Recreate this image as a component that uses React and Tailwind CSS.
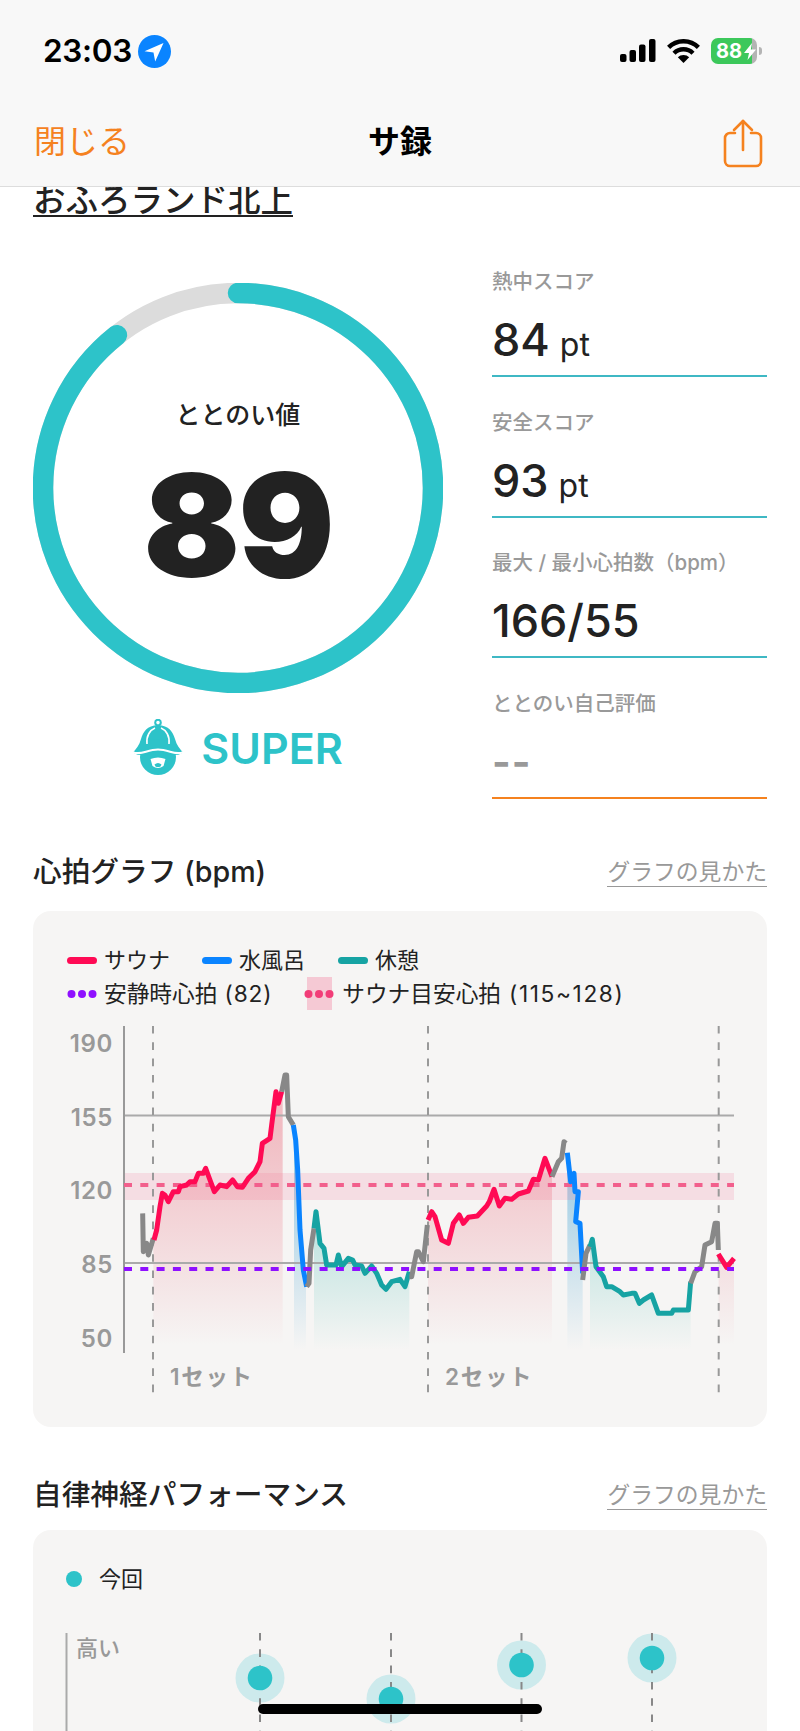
import React from "react";

const TEAL = "#2dc3c9";
const BOTTOM = 660;

// curve points are read off the reference: x = base + vx / 3, y = 1130 + vy / 3
const red1 = [[372,330],[380,300],[390,230],[397,190],[405,195],[415,215],[430,185],[445,185],[450,170],[470,165],[480,155],[495,155],[505,130],[520,130],[527,115],[540,150],[553,185],[570,165],[590,170],[608,150],[622,170],[637,172],[655,145],[675,125],[690,95],[697,40],[720,25],[725,-15],[738,-115],[745,-80],[755,-115]];
const gray1 = [[338,250],[340,365],[350,340],[355,375],[370,325]];
const gray2 = [[755,-115],[765,-165],[770,-165],[775,-40],[790,-15]];
const blue1 = [[790,-15],[797,30],[803,120],[810,300],[820,420],[830,470]];
const gray3 = [[830,470],[837,460],[842,360],[852,295]];
const teal1 = [[852,295],[858,245],[870,340],[882,355],[890,405],[918,405],[925,375],[935,410],[955,385],[968,390],[975,405],[995,408],[1005,430],[1025,408],[1040,430],[1055,465],[1068,478],[1085,455],[1110,448],[1125,470],[1138,425]];
const gray4 = [[1138,440],[1145,440],[1160,365],[1165,365],[1180,395],[1192,285]];
const red2 = [[84,270],[95,245],[105,260],[125,330],[145,340],[160,280],[178,255],[190,280],[205,262],[232,258],[260,228],[268,215],[282,178],[298,228],[315,205],[335,208],[355,192],[385,183],[400,148],[415,150],[435,85],[456,140]];
const gray5 = [[456,140],[475,95],[485,85],[492,35],[498,40]];
const blue2 = [[502,68],[512,155],[522,130],[525,185],[535,185],[527,275],[540,280],[548,430]];
const gray6 = [[548,450],[558,370],[570,345]];
const teal2 = [[570,350],[577,328],[588,410],[610,440],[620,470],[635,470],[660,485],[670,495],[695,490],[705,490],[718,520],[730,510],[755,495],[775,550],[815,550],[820,540],[845,540],[865,540],[872,455]];
const gray7 = [[872,460],[885,425],[905,410],[915,345],[935,335],[945,280],[952,280],[955,360]];
const red3 = [[955,372],[980,412],[1002,385]];

const LEFT = 30;
const RIGHT = 400;
const toPts = (pts, base) => pts.map(([x, y]) => `${base + x / 3},${1130 + y / 3}`).join(" ");
const toArea = (pts, base, x0, x1) =>
  toPts([[x0, pts[0][1]], ...pts, [x1, pts[pts.length - 1][1]], [x1, BOTTOM], [x0, BOTTOM]], base);

function Curve({ pts, base, color }) {
  return <polyline points={toPts(pts, base)} fill="none" stroke={color} strokeWidth="5" strokeLinejoin="round" strokeLinecap="butt" />;
}

function StatBlock({ label, children, lineClass }) {
  return (
    <div className={`h-[113px] flex flex-col border-b-2 ${lineClass}`}>
      <div className="h-[36px] leading-[36px] text-[20.5px] font-medium text-[#999999] whitespace-nowrap">{label}</div>
      <div className="mt-[15px] h-[50px] leading-[50px] text-[#222222] whitespace-nowrap">{children}</div>
    </div>
  );
}

function Dots({ color }) {
  return (
    <svg width="30" height="10" viewBox="0 0 30 10" className="relative block">
      <circle cx="4.5" cy="5" r="4" fill={color} />
      <circle cx="15" cy="5" r="4" fill={color} />
      <circle cx="25.5" cy="5" r="4" fill={color} />
    </svg>
  );
}

function SectionHead({ title }) {
  return (
    <div className="h-[40px] flex items-center justify-between">
      <div className="text-[28.7px] leading-[40px] font-medium text-[#222222] whitespace-nowrap">{title}</div>
      <div className="text-[22.8px] leading-[28px] text-[#999999] border-b border-[#999999] whitespace-nowrap">グラフの見かた</div>
    </div>
  );
}

function HeartChart() {
  const vLines = [153, 428, 718.7];
  const yLabels = [["190", 1043], ["155", 1117], ["120", 1190], ["85", 1264], ["50", 1338]];
  return (
    <svg width="734" height="385" viewBox="33 1020 734 385" className="block mt-[10px]">
      <defs>
        <linearGradient id="gr" gradientUnits="userSpaceOnUse" x1="0" y1="1130" x2="0" y2="1345">
          <stop offset="0" stopColor="#ee9aa5" stopOpacity="0.62" />
          <stop offset="1" stopColor="#ee9aa5" stopOpacity="0" />
        </linearGradient>
        <linearGradient id="gb" gradientUnits="userSpaceOnUse" x1="0" y1="1150" x2="0" y2="1350">
          <stop offset="0" stopColor="#5aaed8" stopOpacity="0.62" />
          <stop offset="1" stopColor="#5aaed8" stopOpacity="0" />
        </linearGradient>
        <linearGradient id="gt" gradientUnits="userSpaceOnUse" x1="0" y1="1240" x2="0" y2="1350">
          <stop offset="0" stopColor="#7fcfc8" stopOpacity="0.42" />
          <stop offset="1" stopColor="#7fcfc8" stopOpacity="0" />
        </linearGradient>
      </defs>

      <polygon points={toArea(red1, LEFT, 370, 758)} fill="url(#gr)" />
      <polygon points={toArea(blue1, LEFT, 792, 828)} fill="url(#gb)" />
      <polygon points={toArea(teal1, LEFT, 852, 1138)} fill="url(#gt)" />
      <polygon points={toArea(red2, RIGHT, 84, 456)} fill="url(#gr)" />
      <polygon points={toArea(blue2, RIGHT, 502, 548)} fill="url(#gb)" />
      <polygon points={toArea(teal2, RIGHT, 570, 872)} fill="url(#gt)" />
      <polygon points={toArea(red3, RIGHT, 956, 1002)} fill="url(#gr)" />

      <rect x="124" y="1173" width="610" height="27" fill="#f26d8c" fillOpacity="0.17" />
      <line x1="124" y1="1115.5" x2="734" y2="1115.5" stroke="#aaaaaa" strokeWidth="2" />
      <line x1="124" y1="1263" x2="734" y2="1263" stroke="#aaaaaa" strokeWidth="2" />
      <line x1="124" y1="1026" x2="124" y2="1353" stroke="#999999" strokeWidth="2" />
      {vLines.map((x) => (
        <line key={x} x1={x} y1="1026" x2={x} y2="1395" stroke="#999999" strokeWidth="2" strokeDasharray="7.6 8.7" />
      ))}
      <line x1="124" y1="1185" x2="734" y2="1185" stroke="#f25f8c" strokeWidth="4" strokeDasharray="8 8.3" />

      <Curve pts={gray1} base={LEFT} color="#888888" />
      <Curve pts={red1} base={LEFT} color="#ff0a54" />
      <Curve pts={gray2} base={LEFT} color="#888888" />
      <Curve pts={blue1} base={LEFT} color="#0a84ff" />
      <Curve pts={gray3} base={LEFT} color="#888888" />
      <Curve pts={teal1} base={LEFT} color="#16a3a3" />
      <Curve pts={gray4} base={LEFT} color="#888888" />
      <Curve pts={red2} base={RIGHT} color="#ff0a54" />
      <Curve pts={gray5} base={RIGHT} color="#888888" />
      <Curve pts={blue2} base={RIGHT} color="#0a84ff" />
      <Curve pts={gray6} base={RIGHT} color="#888888" />
      <Curve pts={teal2} base={RIGHT} color="#16a3a3" />
      <Curve pts={gray7} base={RIGHT} color="#888888" />
      <Curve pts={red3} base={RIGHT} color="#ff0a54" />

      <line x1="124" y1="1269" x2="734" y2="1269" stroke="#8f10ff" strokeWidth="4" strokeDasharray="8 8.3" />

      {yLabels.map(([t, y]) => (
        <text key={t} x="113" y={y + 8.5} textAnchor="end" fontSize="24" fontWeight="600" letterSpacing="0.6" fill="#999999">{t}</text>
      ))}
      <text x="170" y="1385" fontSize="22.5" fontWeight="600" letterSpacing="1.7" fill="#999999">1セット</text>
      <text x="445" y="1385" fontSize="22.5" fontWeight="600" letterSpacing="1.7" fill="#999999">2セット</text>
    </svg>
  );
}

function NerveChart() {
  const cols = [[260, 1677], [391, 1698], [521.5, 1664], [652, 1657]];
  return (
    <svg width="734" height="120" viewBox="33 1625 734 120" className="block mt-[31px]">
      <line x1="66.5" y1="1632" x2="66.5" y2="1745" stroke="#aaaaaa" strokeWidth="2" />
      <text x="76" y="1655" fontSize="22" fontWeight="500" fill="#999999">高い</text>
      {cols.map(([x, y]) => (
        <g key={x}>
          <circle cx={x} cy={y} r="24.5" fill="#cdeaec" />
          <line x1={x} y1="1632" x2={x} y2="1745" stroke="#888888" strokeWidth="2" strokeDasharray="7.6 8.7" />
          <circle cx={x} cy={y} r="12.3" fill={TEAL} />
        </g>
      ))}
    </svg>
  );
}

export default function App() {
  const r = 195;
  const c = 2 * Math.PI * r;
  return (
    <div className="relative w-[800px] h-[1731px] overflow-hidden bg-white font-['Inter','Noto_Sans_CJK_JP',sans-serif]">
      <header className="relative z-10 h-[187px] bg-[#f8f8f8] border-b border-[#dddddd]">
        <div className="h-[102px] flex items-center justify-between pl-[43px] pr-[38px]">
          <div className="flex items-center gap-[6px]">
            <span className="text-[31.5px] leading-[36px] font-semibold text-black tracking-[-0.3px]">23:03</span>
            <svg width="33" height="33" viewBox="0 0 33 33" className="block">
              <circle cx="16.5" cy="16.5" r="16.5" fill="#0a84ff" />
              <path d="M25.5 8 L6.5 16.3 L15.5 17.6 L17.2 26.5 Z" fill="#ffffff" />
            </svg>
          </div>
          <div className="flex items-center gap-[11px]">
            <svg width="36" height="24" viewBox="0 0 36 24" className="block">
              <rect x="0" y="15" width="6.5" height="8" rx="2" fill="#000" />
              <rect x="9.5" y="11" width="6.5" height="12" rx="2" fill="#000" />
              <rect x="19" y="5.5" width="6.5" height="17.5" rx="2" fill="#000" />
              <rect x="29" y="0" width="6.5" height="23" rx="2" fill="#000" />
            </svg>
            <svg width="33" height="24" viewBox="0 0 33 24" className="block">
              <path d="M1.6 8.4 A21 21 0 0 1 31.4 8.4" fill="none" stroke="#000" strokeWidth="4.4" />
              <path d="M7 14.2 A13.5 13.5 0 0 1 26 14.2" fill="none" stroke="#000" strokeWidth="4.4" />
              <path d="M16.5 24 L10.8 18.3 A8 8 0 0 1 22.2 18.3 Z" fill="#000" />
            </svg>
            <div className="relative flex items-center">
              <div className="relative flex w-[46px] h-[26px] rounded-[7px] overflow-hidden">
                <div className="w-[41px] bg-[#3cc85b] text-white text-[20px] leading-[26px] font-bold pl-[5px]">88</div>
                <div className="w-[5px] bg-[#b4b4b4]" />
                <svg width="12" height="17" viewBox="0 0 12 17" className="absolute left-[33px] top-[5px]">
                  <path d="M8 0 L0 10 L5 10 L3.5 17 L12 6.5 L6.8 6.5 Z" fill="#ffffff" />
                </svg>
              </div>
              <div className="w-[3px] h-[8px] ml-[2px] rounded-r-full bg-[#b4b4b4]" />
            </div>
          </div>
        </div>
        <div className="h-[84px] pb-[4px] px-[34px] grid grid-cols-3 items-center">
          <div className="text-[32px] leading-[40px] text-[#f5821f]">閉じる</div>
          <div className="text-[32px] leading-[40px] font-bold text-black text-center">サ録</div>
          <div className="flex justify-end pr-[3px] pt-[4px]">
            <svg width="40" height="50" viewBox="0 0 40 50" fill="none" stroke="#f5821f" strokeWidth="2.6" strokeLinecap="round" strokeLinejoin="round" className="block">
              <path d="M12 14 H7 a5 5 0 0 0 -5 5 V42 a5 5 0 0 0 5 5 H33 a5 5 0 0 0 5 -5 V19 a5 5 0 0 0 -5 -5 H28" />
              <path d="M20 31 V2" />
              <path d="M11 11 L20 2 L29 11" />
            </svg>
          </div>
        </div>
      </header>

      <main className="px-[33px]">
        <div className="h-[31px]">
          <span className="inline-block h-[31px] -mt-[1px] text-[32.5px] leading-[29px] font-medium text-[#222222] border-b-2 border-[#222222] whitespace-nowrap">おふろランド北上</span>
        </div>

        <div className="mt-[46px] flex">
          <div className="w-[410px] pt-[19px]">
            <div className="relative w-[410px] h-[410px]">
              <svg width="410" height="410" viewBox="0 0 410 410" className="block">
                <circle cx="205" cy="205" r={r} fill="none" stroke="#dcdcdc" strokeWidth="20.5" />
                <circle
                  cx="205"
                  cy="205"
                  r={r}
                  fill="none"
                  stroke={TEAL}
                  strokeWidth="20.5"
                  strokeLinecap="round"
                  strokeDasharray={`${c * 0.893} ${c}`}
                  transform="rotate(-90 205 205)"
                />
              </svg>
              <div className="absolute inset-0 flex flex-col items-center">
                <div className="mt-[114px] h-[36px] text-[25px] leading-[36px] font-medium text-[#222222]">ととのい値</div>
                <div className="mt-[8px] h-[168px] text-[143px] leading-[168px] font-black text-[#222222] tracking-[-2px]">89</div>
              </div>
            </div>
            <div className="mt-[26px] h-[58px] flex items-center justify-center gap-[18px]">
              <svg width="50" height="58" viewBox="0 0 50 58" className="block">
                <circle cx="25" cy="3.6" r="2.8" fill="none" stroke={TEAL} strokeWidth="2" />
                <path d="M25 6 C14 6.5 10 13 8 20 C6.5 26 3 30 0 33.5 L5 36 L45 36 L50 33.5 C47 30 43.5 26 42 20 C40 13 36 6.5 25 6 Z" fill={TEAL} />
                <circle cx="25" cy="38" r="18" fill={TEAL} />
                <path d="M0 33 C7 37 14 30.5 25 30.5 C36 30.5 43 37 50 33" fill="none" stroke="#ffffff" strokeWidth="2" />
                <path d="M14 25 C13 17 17 11 22 9" fill="none" stroke="#ffffff" strokeWidth="1.6" />
                <path d="M36 25 C37 17 33 11 28 9" fill="none" stroke="#ffffff" strokeWidth="1.6" />
                <path d="M17.5 40 Q25 37 32.5 40 L30.5 47 Q25 51 19.5 47 Z" fill="#ffffff" />
                <path d="M21.5 45.5 Q25 42.5 28.5 45.5 L27.5 47.5 Q25 48.5 22.5 47.5 Z" fill={TEAL} />
              </svg>
              <span className="text-[43px] leading-[58px] font-semibold text-[#2dc3c9]">SUPER</span>
            </div>
          </div>

          <div className="ml-[49px] w-[275px] flex flex-col gap-[27.7px]">
            <StatBlock label="熱中スコア" lineClass="border-[#3fb8c4]">
              <span className="text-[45px] font-medium">84</span>
              <span className="text-[32px] ml-[10px]">pt</span>
            </StatBlock>
            <StatBlock label="安全スコア" lineClass="border-[#3fb8c4]">
              <span className="text-[45px] font-medium">93</span>
              <span className="text-[32px] ml-[10px]">pt</span>
            </StatBlock>
            <StatBlock label="最大 / 最小心拍数（bpm）" lineClass="border-[#3fb8c4]">
              <span className="text-[45px] font-medium">166/55</span>
            </StatBlock>
            <StatBlock label="ととのい自己評価" lineClass="border-[#f5821f]">
              <span className="text-[40px] font-bold text-[#999999] tracking-[1px]">--</span>
            </StatBlock>
          </div>
        </div>

        <section className="mt-[53px]">
          <SectionHead title="心拍グラフ (bpm)" />
          <div className="mt-[19px] h-[516px] rounded-[18px] bg-[#f6f5f4] pt-[33px]">
            <div className="pl-[34px] h-[33px] flex items-center text-[22px] leading-[33px] text-[#222222] whitespace-nowrap">
              <span className="w-[30px] h-[7px] rounded-full bg-[#ff0a54] mr-[7px]" />
              <span>サウナ</span>
              <span className="w-[30px] h-[7px] rounded-full bg-[#0a84ff] ml-[32px] mr-[7px]" />
              <span>水風呂</span>
              <span className="w-[30px] h-[7px] rounded-full bg-[#16a3a3] ml-[33px] mr-[7px]" />
              <span>休憩</span>
            </div>
            <div className="pl-[34px] h-[33px] flex items-center text-[22.7px] leading-[33px] text-[#222222] whitespace-nowrap">
              <span className="mr-[7px]"><Dots color="#8f10ff" /></span>
              <span>安静時心拍<span className="tracking-[0.8px]"> (82)</span></span>
              <span className="relative ml-[32px] mr-[8px]">
                <span className="absolute left-[3px] top-[-12px] w-[25px] h-[33px] bg-[#f5c9d4]" />
                <Dots color="#f23d78" />
              </span>
              <span>サウナ目安心拍<span className="tracking-[1.6px]"> (115~128)</span></span>
            </div>
            <HeartChart />
          </div>
        </section>

        <section className="mt-[48px]">
          <SectionHead title="自律神経パフォーマンス" />
          <div className="mt-[15px] h-[260px] rounded-[18px] bg-[#f6f5f4] pt-[33px]">
            <div className="pl-[33px] h-[32px] flex items-center text-[22px] leading-[32px] text-[#222222]">
              <span className="w-[16px] h-[16px] rounded-full bg-[#2dc3c9] mr-[17px]" />
              <span>今回</span>
            </div>
            <NerveChart />
          </div>
        </section>
      </main>

      <div className="absolute left-[258px] top-[1704px] w-[284px] h-[10px] rounded-full bg-black" />
    </div>
  );
}
